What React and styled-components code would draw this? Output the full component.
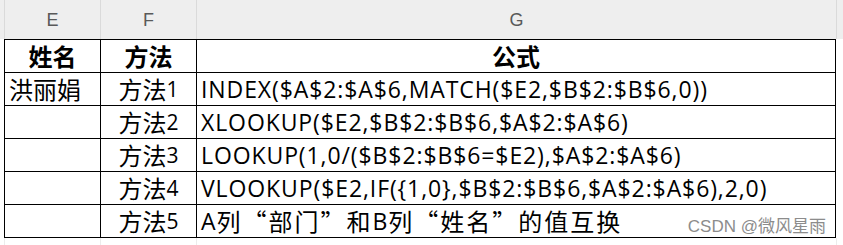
import styled, { createGlobalStyle } from 'styled-components';

const GlobalStyle = createGlobalStyle`
  html, body { margin: 0; padding: 0; background: #fff; }
  body {
    font-family: "Open Sans", "Noto Sans CJK SC", sans-serif;
    color: #000;
  }
`;

// split a string so that CJK runs get their own (larger) size
const HAN = /([\u3000-\u303f\u2018-\u201f\u4e00-\u9fff]+)/;

const splitHan = (text) => text.split(HAN).filter(Boolean);

const isHan = (s) => /[\u3000-\u303f\u2018-\u201f\u4e00-\u9fff]/.test(s);

const rows = [
  { name: '洪丽娟', method: '方法1', formula: 'INDEX($A$2:$A$6,MATCH($E2,$B$2:$B$6,0))' },
  { name: '', method: '方法2', formula: 'XLOOKUP($E2,$B$2:$B$6,$A$2:$A$6)' },
  { name: '', method: '方法3', formula: 'LOOKUP(1,0/($B$2:$B$6=$E2),$A$2:$A$6)' },
  { name: '', method: '方法4', formula: 'VLOOKUP($E2,IF({1,0},$B$2:$B$6,$A$2:$A$6),2,0)' },
  { name: '', method: '方法5', formula: 'A列“部门”和B列“姓名”的值互换' },
];

const Sheet = styled.div`
  position: relative;
  width: 843px;
  height: 245px;
  overflow: hidden;
  background: #fff;
`;

const ColumnBar = styled.div`
  display: grid;
  grid-template-columns: 4px 96px 96px 640px 1fr;
  height: 39px;
  background: #eeeeee;
`;

const ColumnLabel = styled.div`
  display: flex;
  align-items: center;
  justify-content: center;
  border-left: ${p => (p.$first ? 'none' : '1px solid #dadada')};
  color: #595959;
  font-family: "Liberation Sans", Arial, sans-serif;
  font-size: 18px;
  padding-top: 2px;
`;

const Grid = styled.div`
  display: grid;
  grid-template-columns: 96px 96px 640px;
  grid-auto-rows: 33px;
  margin-left: 4px;
  width: 832px;
  border-top: 1px solid #000;
`;

const Han = styled.span`
  font-family: "Noto Sans CJK SC", sans-serif;
  font-size: 24px;
`;

const Cell = styled.div`
  display: flex;
  align-items: center;
  justify-content: ${p => p.$align || 'flex-start'};
  padding: 0 ${p => (p.$align === 'center' ? '0' : '4px')};
  border-left: 1px solid #000;
  border-bottom: 1px solid #000;
  border-right: ${p => (p.$last ? '1px solid #000' : 'none')};
  font-size: ${p => (p.$formula ? '23px' : '21px')};
  letter-spacing: ${p => (p.$formula ? '0.9px' : '0')};
  font-weight: ${p => (p.$bold ? 700 : 400)};
  white-space: nowrap;
  line-height: 1;

  ${Han} {
    letter-spacing: ${p => (p.$formula ? '2px' : '0')};
  }
`;

const Below = styled.div`
  display: grid;
  grid-template-columns: 4px 96px 96px 640px 1fr;
  height: 10px;
`;

const GhostLine = styled.div`
  border-left: ${p => (p.$first ? 'none' : '1px solid #ececec')};
`;

const Watermark = styled.div`
  position: absolute;
  right: 17px;
  bottom: 8px;
  font-size: 17px;
  color: #8c8c8c;
  font-family: "Liberation Sans", "Noto Sans CJK SC", sans-serif;
`;

const Text = ({ children }) =>
  splitHan(children).map((part, i) =>
    isHan(part) ? <Han key={i}>{part}</Han> : <span key={i}>{part}</span>
  );

export default function App() {
  return (
    <Sheet>
      <GlobalStyle />
      <ColumnBar>
        <ColumnLabel $first />
        <ColumnLabel>E</ColumnLabel>
        <ColumnLabel>F</ColumnLabel>
        <ColumnLabel>G</ColumnLabel>
        <ColumnLabel />
      </ColumnBar>
      <Grid>
        <Cell $align="center" $bold><Text>姓名</Text></Cell>
        <Cell $align="center" $bold><Text>方法</Text></Cell>
        <Cell $align="center" $bold $last><Text>公式</Text></Cell>
        {rows.map(r => [
          <Cell key={r.method + 'n'}>{r.name && <Text>{r.name}</Text>}</Cell>,
          <Cell key={r.method + 'm'} $align="center"><Text>{r.method}</Text></Cell>,
          <Cell key={r.method + 'f'} $formula $last><Text>{r.formula}</Text></Cell>,
        ])}
      </Grid>
      <Below>
        <GhostLine $first />
        <GhostLine />
        <GhostLine />
        <GhostLine />
        <GhostLine />
      </Below>
      <Watermark>CSDN @微风星雨</Watermark>
    </Sheet>
  );
}
